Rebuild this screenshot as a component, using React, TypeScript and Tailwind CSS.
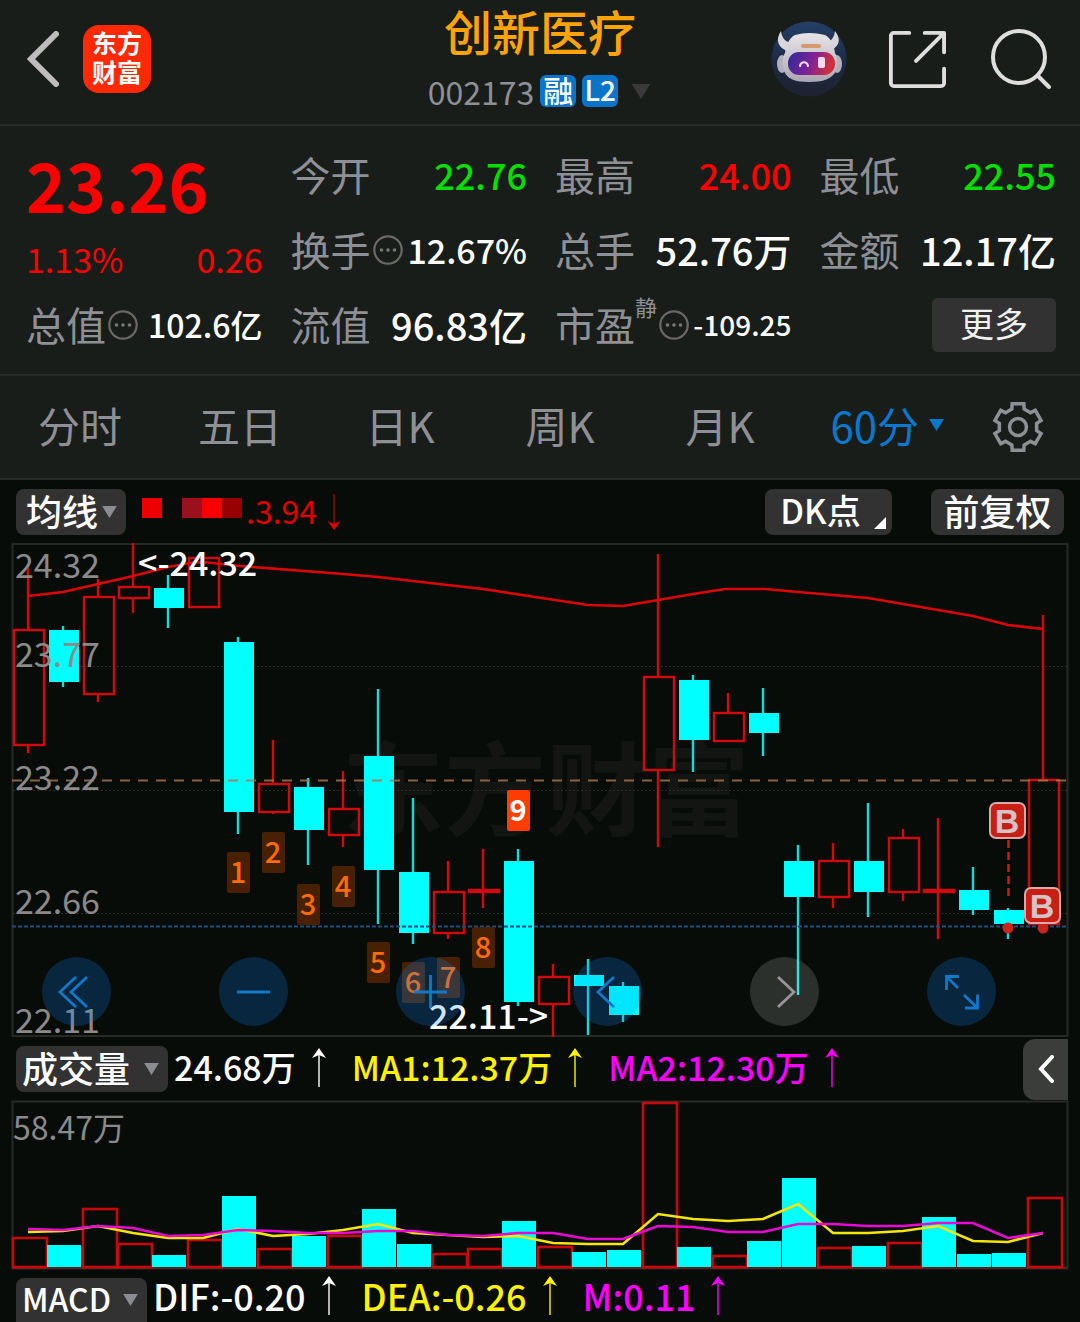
import { useState } from "react";

type Candle = {
  up: boolean;
  high: number;
  top: number;
  bottom: number;
  low: number;
  volumeTop: number;
};

const STEP = 35;
const FIRST_X = 28;
const VOLUME_BASE = 1268;

const centerX = (index: number) => FIRST_X + STEP * index;

const rows: [number, number, number, number, number, number][] = [
  [1, 565, 630, 745, 753, 1237],
  [0, 626, 630, 682, 687, 1245],
  [1, 579, 597, 694, 702, 1208],
  [1, 543, 587, 598, 613, 1243],
  [0, 575, 588, 608, 628, 1255],
  [1, 558, 558, 607, 608, 1239],
  [0, 637, 642, 812, 834, 1196],
  [1, 740, 784, 812, 814, 1248],
  [0, 778, 787, 830, 865, 1236],
  [1, 771, 809, 835, 847, 1235],
  [0, 689, 756, 870, 924, 1209],
  [0, 798, 872, 933, 944, 1244],
  [1, 861, 892, 933, 939, 1253],
  [1, 849, 890, 892, 908, 1248],
  [0, 849, 861, 1002, 1006, 1221],
  [1, 964, 977, 1004, 1037, 1246],
  [0, 959, 975, 986, 1035, 1252],
  [0, 982, 986, 1015, 1022, 1250],
  [1, 554, 677, 770, 847, 1102],
  [0, 675, 680, 740, 772, 1247],
  [1, 693, 713, 741, 741, 1255],
  [0, 688, 713, 733, 756, 1241],
  [0, 845, 861, 897, 995, 1178],
  [1, 843, 861, 897, 908, 1247],
  [0, 803, 861, 892, 917, 1246],
  [1, 829, 838, 892, 901, 1242],
  [1, 818, 890, 892, 939, 1217],
  [0, 867, 890, 910, 915, 1254],
  [0, 908, 910, 924, 939, 1253],
  [1, 615, 780, 924, 930, 1197],
];

// Bar 26 closed flat in price but is counted as a falling volume bar.
const FLAT_DOWN_INDEX = 26;

const candles: Candle[] = rows.map(([up, high, top, bottom, low, volumeTop]) => ({
  up: up === 1,
  high,
  top,
  bottom,
  low,
  volumeTop,
}));

const priceAverage =
  "28,596 63,592 98,584 133,576 168,567 190,563 203,562 240,566 343,574 378,577 430,583 483,589 535,597 588,605 623,606 658,600 693,594 725,589 765,589 798,592 868,598 903,604 938,610 973,616 1008,625 1043,629";

const volumeMa1 = [
  1232, 1231, 1226, 1233, 1238, 1238, 1229, 1236, 1234, 1230, 1224, 1233, 1235, 1237, 1236, 1243, 1244, 1244, 1214,
  1219, 1221, 1219, 1204, 1233, 1233, 1231, 1226, 1241, 1242, 1233,
];
const volumeMa2 = [
  1229, 1230, 1226, 1228, 1236, 1235, 1230, 1231, 1233, 1233, 1231, 1231, 1235, 1236, 1233, 1233, 1239, 1239, 1226,
  1227, 1232, 1232, 1224, 1224, 1226, 1226, 1223, 1223, 1238, 1233,
];

const toPoints = (values: number[]) => values.map((y, i) => `${centerX(i)},${y}`).join(" ");

const priceLabels = [
  { text: "24.32", y: 578 },
  { text: "23.77", y: 667 },
  { text: "23.22", y: 790 },
  { text: "22.66", y: 914 },
  { text: "22.11", y: 1033 },
];

const countTops = [852, 832, 884, 866, 942, 962, 957, 927, 790];

// Six teeth, each given as [radius, angle from the tooth's middle].
const gearPoints = [0, 60, 120, 180, 240, 300]
  .flatMap((tooth) =>
    [
      [19, -19],
      [24, -14],
      [24, 14],
      [19, 19],
    ].map(([radius, offset]) => {
      const angle = ((tooth + offset - 90) * Math.PI) / 180;
      return `${26 + radius * Math.cos(angle)},${26 + radius * Math.sin(angle)}`;
    }),
  )
  .join(" ");

function Triangle({ className }: { className: string }) {
  return (
    <svg viewBox="0 0 16 13" className={className} fill="currentColor" aria-hidden="true">
      <path d="M0 0h16L8 13z" />
    </svg>
  );
}

function MoreDots() {
  return (
    <svg viewBox="0 0 30 32" className="ml-0.5 h-8 w-[30px] shrink-0" aria-hidden="true">
      <circle cx="15" cy="16" r="13.7" fill="none" stroke="#6b6966" strokeWidth="2.2" />
      <circle cx="8.5" cy="16" r="1.8" fill="#7a7876" />
      <circle cx="15" cy="16" r="1.8" fill="#7a7876" />
      <circle cx="21.5" cy="16" r="1.8" fill="#7a7876" />
    </svg>
  );
}

function Arrow({ down, className }: { down?: boolean; className?: string }) {
  return (
    <svg viewBox="0 0 14 40" className={`h-10 w-3.5 shrink-0 ${className ?? ""}`} fill="currentColor" aria-hidden="true">
      {down ? (
        <>
          <path d="M6.3 2h1.4v32H6.3z" opacity="0.7" />
          <path d="M7 38 .5 29l6.500 3 6.500-3z" />
        </>
      ) : (
        <>
          <path d="M6.300 6h1.400v34H6.300z" />
          <path d="M7 1 0 11l7-3 7 3z" />
        </>
      )}
    </svg>
  );
}

function PillSelect({
  label,
  options,
  className,
  triangle,
}: {
  label: string;
  options: string[];
  className: string;
  triangle: string;
}) {
  return (
    <label className="relative flex shrink-0 items-center">
      <select
        aria-label={label}
        className={`appearance-none bg-[#323232] pb-1 font-medium text-white outline-none ${className}`}
      >
        {options.map((option) => (
          <option key={option}>{option}</option>
        ))}
      </select>
      <Triangle className={`pointer-events-none absolute h-3 text-[#8b8c92] ${triangle}`} />
    </label>
  );
}

function Indicator({ text, className }: { text: string; className: string }) {
  return (
    <span className={`flex items-center gap-4 pb-1 leading-[46px] font-medium whitespace-nowrap ${className}`}>
      {text}
      <Arrow />
    </span>
  );
}

function RobotAvatar() {
  return (
    <svg viewBox="0 0 76 76" className="size-[76px]" aria-hidden="true">
      <defs>
        <linearGradient id="sky" x1="0" y1="0" x2="0" y2="1">
          <stop offset="0" stopColor="#243f68" />
          <stop offset="0.6" stopColor="#1b2840" />
          <stop offset="1" stopColor="#1f2230" />
        </linearGradient>
        <linearGradient id="visor" x1="0" y1="0" x2="1" y2="0.2">
          <stop offset="0" stopColor="#2b2b9a" />
          <stop offset="0.55" stopColor="#7d2296" />
          <stop offset="1" stopColor="#d0303c" />
        </linearGradient>
        <linearGradient id="shell" x1="0" y1="0" x2="0" y2="1">
          <stop offset="0" stopColor="#e8e4e6" />
          <stop offset="1" stopColor="#aaa7b4" />
        </linearGradient>
      </defs>
      <circle cx="38" cy="38" r="37.500" fill="url(#sky)" />
      <path d="M10 10c-6 9-3 17 7 20l6-8c-8 0-12-4-13-12zM64 10c7 9 4 17-7 20l-6-8c8 0 12-4 13-12z" fill="#d9d6dc" />
      <ellipse cx="11" cy="43" rx="5" ry="9" fill="#b3b0bd" />
      <ellipse cx="66" cy="43" rx="5" ry="9" fill="#b3b0bd" />
      <path
        d="M24 14q14-4 30 0c6 3 9 10 10 18 3 4 3 13 1 18-4 8-13 11-27 11S16 58 13 50c-2-5-2-14 1-18 1-8 4-15 10-18z"
        fill="url(#shell)"
      />
      <rect x="17" y="31" width="47" height="23" rx="11" fill="url(#visor)" />
      <rect x="30" y="23" width="20" height="4" rx="2" fill="#d59a70" />
      <path d="M29 45c1-5 7-5 8 0" fill="none" stroke="#e8ddf8" strokeWidth="2.200" strokeLinecap="round" />
      <rect x="47" y="36" width="7" height="11" rx="2" fill="#f1dbe9" />
    </svg>
  );
}

function Header() {
  return (
    <header className="grid h-[126px] grid-cols-[1fr_auto_1fr] border-b-2 border-[#272a28] pt-1">
      <div className="flex h-[110px] items-center gap-6 pl-[27px]">
        <button type="button" aria-label="返回">
          <svg viewBox="0 0 32 56" className="h-14 w-8" fill="none" stroke="#bdbdbd" strokeWidth="6">
            <path d="M29 3 4 28l25 25" strokeLinecap="round" />
          </svg>
        </button>
        <div className="grid size-[68px] place-content-center rounded-2xl bg-[#ff2a04] pb-1 text-center text-[25px] leading-[29px] font-bold text-white">
          <span>东方</span>
          <span>财富</span>
        </div>
      </div>

      <div className="flex flex-col items-center">
        <h1 className="text-[48px] leading-[52px] font-medium text-[#ffa408]">创新医疗</h1>
        <div className="flex h-[70px] items-center gap-1.5">
          <span className="text-[32px] leading-8 text-[#8f8f96]">002173</span>
          <span className="grid h-8 w-9 place-content-center rounded-md bg-[#0a74c8] pb-1 text-[30px] leading-8 font-medium text-white">
            融
          </span>
          <span className="grid h-8 w-9 place-content-center rounded-md bg-[#0a74c8] pb-1 text-[28px] leading-8 font-medium text-white">
            L2
          </span>
          <Triangle className="ml-1.5 h-[15px] w-[22px] text-[#3a3a3a]" />
        </div>
      </div>

      <div className="flex h-[110px] items-center justify-end pr-[29px]">
        <button type="button" aria-label="智能助手" className="mr-[41px]">
          <RobotAvatar />
        </button>
        <button type="button" aria-label="分享" className="mr-[45px]">
          <svg viewBox="0 0 60 60" className="size-[58px]" fill="none" stroke="#dedede" strokeWidth="4" strokeLinecap="round" strokeLinejoin="round">
            <path d="M22 3H6a3 3 0 0 0-3 3v49a3 3 0 0 0 3 3h49a3 3 0 0 0 3-3V40M38 3h20v20M57 4 29 32" />
          </svg>
        </button>
        <button type="button" aria-label="搜索">
          <svg viewBox="0 0 60 60" className="size-[60px]" fill="none" stroke="#dedede" strokeWidth="4" strokeLinecap="round">
            <circle cx="28" cy="28" r="26" />
            <path d="m47 47 11 11" />
          </svg>
        </button>
      </div>
    </header>
  );
}

function Stat({
  label,
  value,
  valueClass,
  dots,
  sup,
}: {
  label: string;
  value: string;
  valueClass: string;
  dots?: boolean;
  sup?: string;
}) {
  return (
    <div className="flex h-[75px] items-center justify-between whitespace-nowrap">
      <span className="flex items-center text-[40px] leading-[75px] text-[#8f8f96]">
        {label}
        {sup ? <sup className="top-0 self-start text-[22px] leading-[38px]">{sup}</sup> : null}
        {dots ? <MoreDots /> : null}
      </span>
      <span className={`leading-[75px] font-medium ${valueClass}`}>{value}</span>
    </div>
  );
}

function Quote() {
  return (
    <section className="grid grid-cols-4 gap-x-7 border-b-2 border-[#272a28] pr-6 pl-[26px] pt-[11px] pb-3">
      <div className="row-span-2 text-[#ff0000]">
        <p className="text-[68px] leading-[94px] font-bold">23.26</p>
        <p className="flex justify-between text-[34px] leading-[56px]">
          <span>1.13%</span>
          <span>0.26</span>
        </p>
      </div>
      <Stat label="今开" value="22.76" valueClass="text-[36px] text-[#00e000]" />
      <Stat label="最高" value="24.00" valueClass="text-[36px] text-[#ff0000]" />
      <Stat label="最低" value="22.55" valueClass="text-[36px] text-[#00e000]" />
      <Stat label="换手" value="12.67%" valueClass="text-[34px] text-white" dots />
      <Stat label="总手" value="52.76万" valueClass="text-[38px] text-white" />
      <Stat label="金额" value="12.17亿" valueClass="text-[38px] text-white" />
      <Stat label="总值" value="102.6亿" valueClass="text-[32px] text-white" dots />
      <Stat label="流值" value="96.83亿" valueClass="text-[38px] text-white" />
      <Stat label="市盈" value="-109.25" valueClass="text-[28px] text-white" sup="静" dots />
      <div className="flex h-[75px] items-center justify-end">
        <button type="button" className="h-[54px] w-[124px] rounded-md bg-[#323232] pb-1 text-[34px] leading-[50px] text-[#f0f0f0]">
          更多
        </button>
      </div>
    </section>
  );
}

function PeriodTabs() {
  const [active, setActive] = useState("60分");
  const tabs = ["分时", "五日", "日K", "周K", "月K"];

  return (
    <nav className="grid h-[104px] grid-cols-[160fr_160fr_160fr_160fr_160fr_176fr_104fr] items-center border-b-2 border-[#272a28] pb-1 text-[42px] leading-[60px] text-[#8f8f96]">
      {tabs.map((tab) => (
        <button key={tab} type="button" onClick={() => setActive(tab)} className={active === tab ? "text-[#0a78cc]" : ""}>
          {tab}
        </button>
      ))}
      <label className="relative flex items-center justify-center text-[#0a78cc]">
        <select aria-label="分钟周期" className="appearance-none pr-[26px] outline-none" onChange={(e) => setActive(e.target.value)}>
          <option>60分</option>
          <option>30分</option>
          <option>15分</option>
        </select>
        <Triangle className="pointer-events-none absolute right-8 h-3 w-[15px]" />
      </label>
      <button type="button" aria-label="设置" className="justify-self-center pt-1 pr-5">
        <svg viewBox="0 0 52 52" className="size-[52px]" fill="none" stroke="#8f8f96" strokeWidth="3.500">
          <polygon points={gearPoints} />
          <circle cx="26" cy="26" r="8.500" />
        </svg>
      </button>
    </nav>
  );
}

function ChartToolbar() {
  return (
    <div className="flex h-[63px] items-center px-4">
      <PillSelect
        label="均线"
        options={["均线", "布林"]}
        className="h-[46px] rounded-lg pr-[27px] pl-2.5 text-[36px] leading-[42px]"
        triangle="right-[9px] w-[15px]"
      />
      <span className="mb-2 ml-4 h-5 w-5 bg-[#ee0000]" />
      <span className="mb-2 ml-5 flex h-5">
        <span className="w-5 bg-[#9a101c]" />
        <span className="w-5 bg-[#f80000]" />
        <span className="w-5 bg-[#980000]" />
      </span>
      <span className="ml-1 pb-1 text-[32px] leading-[42px] text-[#e00000]">.3.94</span>
      <Arrow down className="ml-2.5 text-[#e00000]" />
      <button type="button" className="relative ml-auto h-[46px] w-[127px] rounded-lg bg-[#323232] pr-4 pb-1 text-[34px] leading-[42px] font-medium text-white">
        DK点
        <svg viewBox="0 0 12 12" className="absolute right-1.5 bottom-1.5 size-3" fill="#fff" aria-hidden="true">
          <path d="M12 0v12H0z" />
        </svg>
      </button>
      <button type="button" className="ml-[39px] h-[46px] w-[133px] rounded-lg bg-[#323232] pb-1 text-[36px] leading-[42px] font-medium text-white">
        前复权
      </button>
    </div>
  );
}

function BuyMark({ x, y }: { x: number; y: number }) {
  return (
    <g>
      <rect x={x} y={y} width="35" height="35" rx="6" fill="#c81e14" stroke="#dba9a6" strokeWidth="2" />
      <text x={x + 17} y={y + 30} textAnchor="middle" className="fill-[#d6c3c5] font-['Liberation_Sans',sans-serif] text-[34px] font-bold">
        B
      </text>
    </g>
  );
}

const circleButtons = [
  { label: "最早", paths: "M34 20 18 35l16 15M45 20 29 35l16 15" },
  { label: "缩小", paths: "M18 35h33" },
  { label: "放大", paths: "M18 35h33M34.500 18v33" },
  { label: "向左", paths: "M41 20 25 35l16 15" },
  { label: "向右", paths: "M28 20l16 15-16 15", muted: true },
  { label: "全屏", paths: "M32 19.500H19.500V33M19.500 19.500 31 31M38 51h12.500V37.500M50.500 51 37 38" },
];

function PriceChart() {
  return (
    <div className="relative mx-3">
      <svg viewBox="12 543 1056 494" className="block w-full overflow-visible" role="img" aria-label="60分钟K线">
        <rect x="12.500" y="544" width="1055" height="492" fill="none" stroke="#262926" strokeWidth="2" />
        <text x="342" y="828" className="fill-[#121512] text-[102px] font-bold">
          东方财富
        </text>
        <g stroke="#2b2e2b" strokeDasharray="2 2">
          <path d="M13 666.500h1054M13 790.500h1054M13 913.500h1054" />
        </g>

        {candles.map((candle, i) => {
          const x = centerX(i);
          const color = candle.up ? "#d20a0e" : "#00ffff";
          return (
            <g key={i}>
              <path
                d={`M${x} ${candle.high}V${candle.top}M${x} ${candle.bottom}V${candle.low}`}
                stroke={candle.up ? color : "#14dcdc"}
                strokeWidth="2.400"
              />
              {candle.up ? (
                <rect
                  x={x - 14}
                  y={candle.top}
                  width="30"
                  height={candle.bottom - candle.top}
                  fill="none"
                  stroke={color}
                  strokeWidth="2.400"
                />
              ) : (
                <rect x={x - 14} y={candle.top} width="30" height={candle.bottom - candle.top} fill={color} />
              )}
            </g>
          );
        })}

        <path d="M12 780.500h1055" stroke="#a9794a" strokeWidth="2" strokeDasharray="10 8" opacity="0.8" />
        <path d="M12 926.500h1055" stroke="#1d4e7c" strokeWidth="2" strokeDasharray="4 2" />
        <polyline points={priceAverage} fill="none" stroke="#dc0608" strokeWidth="2.600" />

        {priceLabels.map((label) => (
          <text key={label.text} x="15" y={label.y} className="fill-[#8b8989] text-[34px]">
            {label.text}
          </text>
        ))}
        <text x="138" y="576" className="fill-white text-[34px] font-medium">
          &lt;-24.32
        </text>

        {countTops.map((top, i) => {
          const x = centerX(i + 6);
          const last = i === countTops.length - 1;
          return (
            <g key={i}>
              <rect x={x - 11} y={top} width="23" height="41" rx="2" fill={last ? "#ff3d00" : "#482004"} />
              <text
                x={x}
                y={top + 31}
                textAnchor="middle"
                className={last ? "fill-white text-[29px] font-bold" : "fill-[#ff6a0a] text-[29px] font-medium"}
              >
                {i + 1}
              </text>
            </g>
          );
        })}
        <text x="429" y="1029" className="fill-white text-[34px] font-medium">
          22.11-&gt;
        </text>

        <path d="M1008.500 840v56" stroke="#c02018" strokeWidth="2.500" strokeDasharray="8 4" />
        <circle cx="1008" cy="928" r="5.500" fill="#c8251c" />
        <circle cx="1043" cy="928" r="5.500" fill="#c8251c" />
        <BuyMark x={990} y={803} />
        <BuyMark x={1025} y={888} />
      </svg>

      <div className="absolute inset-x-0 bottom-[11px] flex justify-between pr-[72px] pl-[30px]">
        {circleButtons.map((button) => (
          <button
            key={button.label}
            type="button"
            aria-label={button.label}
            className={`size-[69px] rounded-full ${button.muted ? "bg-white/15" : "bg-[#0888ff]/22"}`}
          >
            <svg viewBox="0 0 69 69" fill="none" stroke={button.muted ? "#96969a" : "#1478c8"} strokeWidth="2.800">
              <path d={button.paths} />
            </svg>
          </button>
        ))}
      </div>
    </div>
  );
}

function VolumeChart() {
  return (
    <div className="mx-3">
      <svg viewBox="12 1101 1056 168" className="block w-full overflow-visible" role="img" aria-label="成交量">
        <rect x="12.500" y="1101.500" width="1055" height="167" fill="none" stroke="#262926" strokeWidth="2" />
        <path d="M12 1268h1055" stroke="#5a2320" strokeWidth="2" />
        {candles.map((candle, i) => {
          const x = 12 + STEP * i;
          const height = VOLUME_BASE - candle.volumeTop;
          if (candle.up && i !== FLAT_DOWN_INDEX) {
            return (
              <rect
                key={i}
                x={x + 1}
                y={candle.volumeTop + 1}
                width="34"
                height={height - 2}
                fill="none"
                stroke="#c8080c"
                strokeWidth="2.600"
              />
            );
          }
          return <rect key={i} x={x} y={candle.volumeTop} width="34" height={height - 1} fill="#00ffff" />;
        })}
        <polyline points={toPoints(volumeMa1)} fill="none" stroke="#f5e60a" strokeWidth="2.600" />
        <polyline points={toPoints(volumeMa2)} fill="none" stroke="#e60ad2" strokeWidth="2.600" />
        <text x="13" y="1140" className="fill-[#8b8989] text-[32px]">
          58.47万
        </text>
      </svg>
    </div>
  );
}

export default function App() {
  return (
    <main className="min-h-screen overflow-x-hidden bg-[#080c09] font-['Noto_Sans_CJK_SC',sans-serif]">
      <div className="bg-[#191d1a]">
        <Header />
        <Quote />
        <PeriodTabs />
      </div>

      <ChartToolbar />
      <PriceChart />

      <div className="flex h-16 items-center pr-3 pl-4">
        <PillSelect
          label="副图指标一"
          options={["成交量", "成交额"]}
          className="h-[46px] rounded-lg pr-[37px] pl-1.5 text-[36px] leading-[42px]"
          triangle="right-[9px] w-[15px]"
        />
        <div className="ml-1.5 flex gap-[26px] text-[34px]">
          <Indicator text="24.68万" className="text-white" />
          <Indicator text="MA1:12.37万" className="text-[#fff200]" />
          <Indicator text="MA2:12.30万" className="text-[#ff00ff]" />
        </div>
        <button type="button" aria-label="展开" className="ml-auto grid h-[61px] w-[45px] place-content-center rounded-l-xl bg-[#3a3d3a]">
          <svg viewBox="0 0 16 28" className="h-7 w-4" fill="none" stroke="#fff" strokeWidth="4" strokeLinecap="round">
            <path d="M14 2 3 14l11 12" />
          </svg>
        </button>
      </div>
      <VolumeChart />

      <div className="flex h-[53px] items-end pr-3 pl-4">
        <PillSelect
          label="副图指标二"
          options={["MACD", "KDJ"]}
          className="h-11 rounded-t-lg pr-[35px] pl-1.5 text-[32px] leading-[40px]"
          triangle="right-[9px] w-[15px]"
        />
        <div className="ml-1.5 flex gap-[26px] text-[36px]">
          <Indicator text="DIF:-0.20" className="text-white" />
          <Indicator text="DEA:-0.26" className="text-[#fff200]" />
          <Indicator text="M:0.11" className="text-[#ff00ff]" />
        </div>
      </div>
    </main>
  );
}
